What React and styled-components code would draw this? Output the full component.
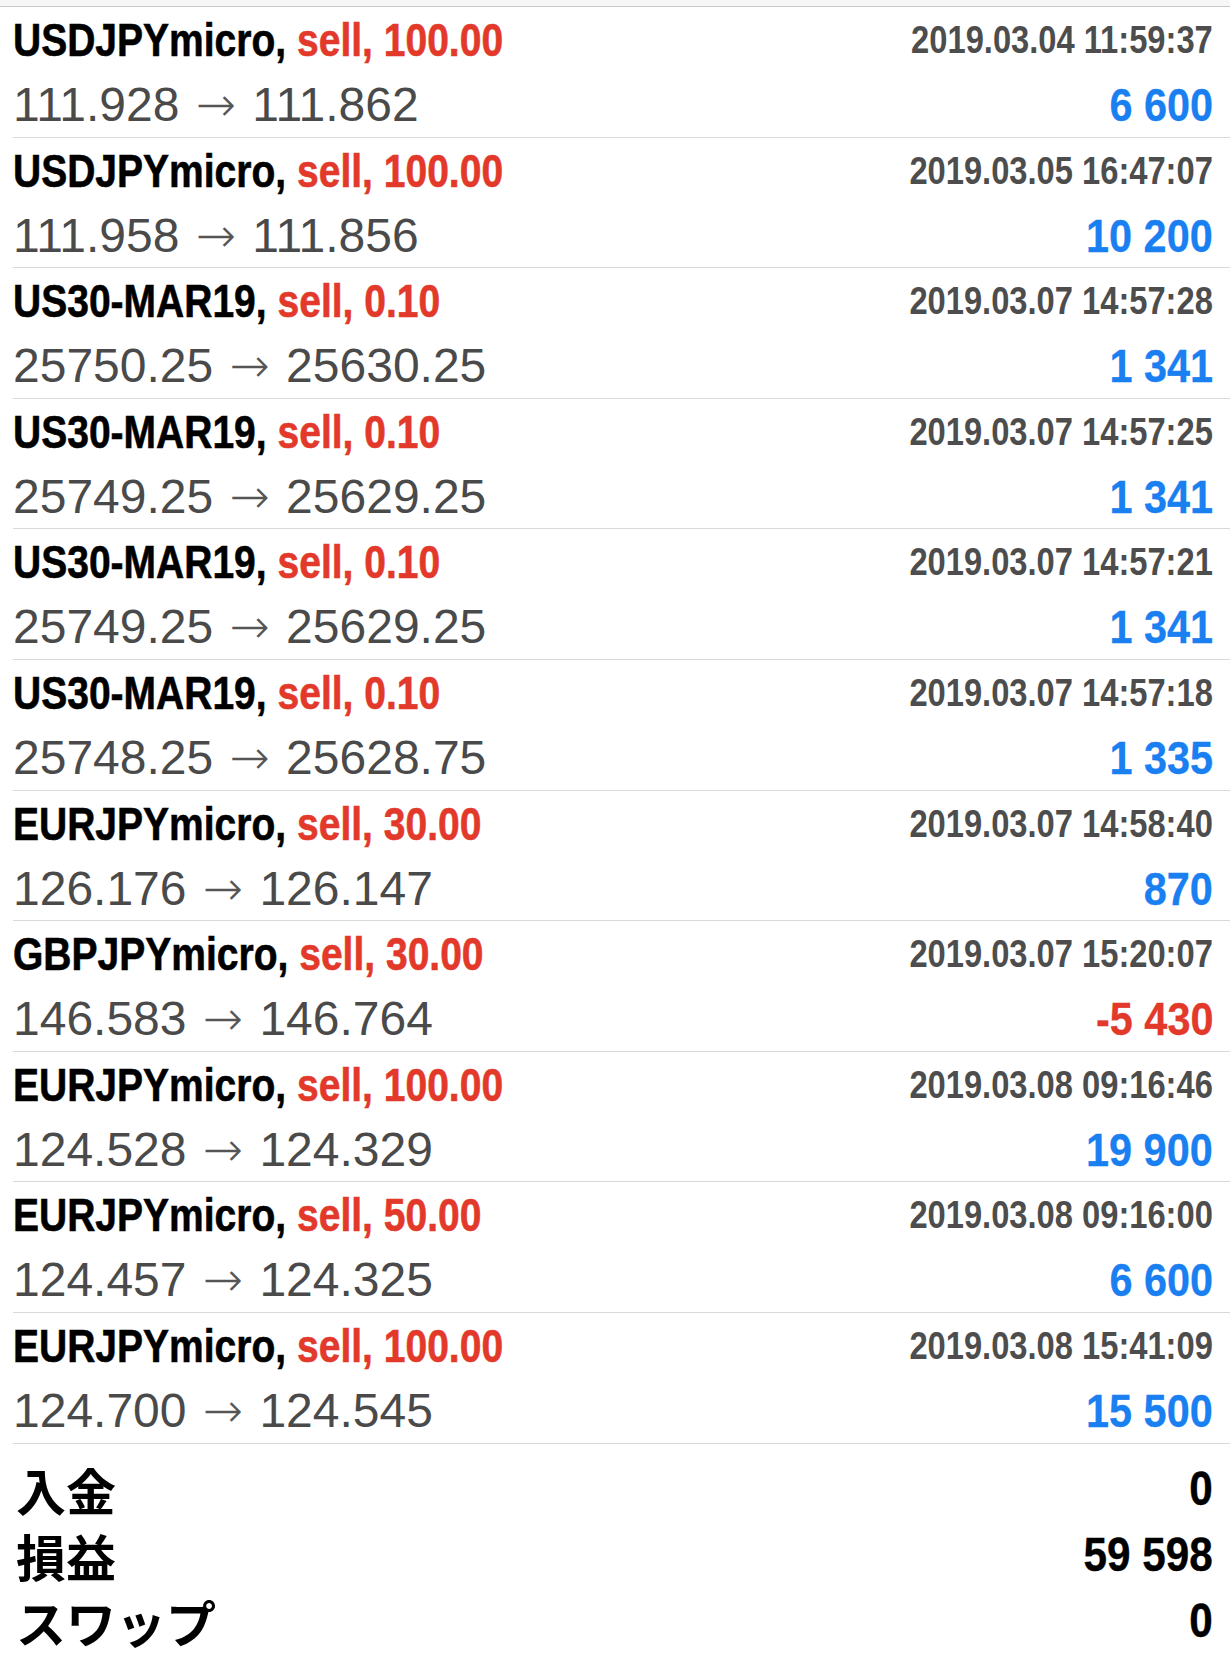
import React from "react";
import styled, { createGlobalStyle } from "styled-components";

const GlobalStyle = createGlobalStyle`
  html, body {
    margin: 0;
    padding: 0;
    background: #ffffff;
  }
  body {
    font-family: "Liberation Sans", Arial, sans-serif;
    -webkit-font-smoothing: antialiased;
  }
`;

const trades = [
  { symbol: "USDJPYmicro", lots: "100.00", time: "2019.03.04 11:59:37", open: "111.928", close: "111.862", profit: "6 600" },
  { symbol: "USDJPYmicro", lots: "100.00", time: "2019.03.05 16:47:07", open: "111.958", close: "111.856", profit: "10 200" },
  { symbol: "US30-MAR19", lots: "0.10", time: "2019.03.07 14:57:28", open: "25750.25", close: "25630.25", profit: "1 341" },
  { symbol: "US30-MAR19", lots: "0.10", time: "2019.03.07 14:57:25", open: "25749.25", close: "25629.25", profit: "1 341" },
  { symbol: "US30-MAR19", lots: "0.10", time: "2019.03.07 14:57:21", open: "25749.25", close: "25629.25", profit: "1 341" },
  { symbol: "US30-MAR19", lots: "0.10", time: "2019.03.07 14:57:18", open: "25748.25", close: "25628.75", profit: "1 335" },
  { symbol: "EURJPYmicro", lots: "30.00", time: "2019.03.07 14:58:40", open: "126.176", close: "126.147", profit: "870" },
  { symbol: "GBPJPYmicro", lots: "30.00", time: "2019.03.07 15:20:07", open: "146.583", close: "146.764", profit: "-5 430", loss: true },
  { symbol: "EURJPYmicro", lots: "100.00", time: "2019.03.08 09:16:46", open: "124.528", close: "124.329", profit: "19 900" },
  { symbol: "EURJPYmicro", lots: "50.00", time: "2019.03.08 09:16:00", open: "124.457", close: "124.325", profit: "6 600" },
  { symbol: "EURJPYmicro", lots: "100.00", time: "2019.03.08 15:41:09", open: "124.700", close: "124.545", profit: "15 500" },
];

const totals = [
  { label: "入金", value: "0" },
  { label: "損益", value: "59 598" },
  { label: "スワップ", value: "0" },
];

function App() {
  return (
    <>
      <GlobalStyle />
      <Screen>
        <TopStrip />
        <TradeList>
          {trades.map((t, i) => (
            <TradeRow key={i}>
              <HeadLine>
                <Title>
                  {t.symbol}, <Side>sell, {t.lots}</Side>
                </Title>
                <Time>{t.time}</Time>
              </HeadLine>
              <PriceLine>
                <Prices>
                  {t.open} <Arrow>→</Arrow> {t.close}
                </Prices>
                <Profit $loss={t.loss}>{t.profit}</Profit>
              </PriceLine>
            </TradeRow>
          ))}
        </TradeList>
        <Summary>
          {totals.map((s) => (
            <SummaryRow key={s.label}>
              <SummaryLabel>{s.label}</SummaryLabel>
              <SummaryValue>{s.value}</SummaryValue>
            </SummaryRow>
          ))}
        </Summary>
      </Screen>
    </>
  );
}

const Screen = styled.div`
  width: 1230px;
  height: 1657px;
  overflow: hidden;
  background: #ffffff;
`;

const TopStrip = styled.div`
  height: 6px;
  background: #f7f7f7;
  border-bottom: 1px solid #c8c8c8;
`;

const TradeList = styled.div`
  display: flex;
  flex-direction: column;
  padding-left: 13px;
`;

const TradeRow = styled.div`
  box-sizing: border-box;
  height: 130.6px;
  flex: none;
  padding: 5px 17px 0 0;
  border-bottom: 1px solid #d9d9d9;
  display: flex;
  flex-direction: column;
`;

const HeadLine = styled.div`
  display: flex;
  justify-content: space-between;
  align-items: baseline;
  flex: none;
  height: 56px;
  line-height: 56px;
`;

const Title = styled.span`
  display: inline-block;
  font-weight: 700;
  font-size: 47px;
  color: #000000;
  white-space: pre;
  -webkit-text-stroke: 0.6px currentColor;
  transform: scaleX(0.83);
  transform-origin: left center;
`;

const Side = styled.span`
  color: #e2392b;
`;

const Time = styled.span`
  display: inline-block;
  font-weight: 700;
  font-size: 38px;
  color: #4d4d4d;
  white-space: pre;
  transform: translateY(-3px) scaleX(0.86);
  transform-origin: right center;
`;

const PriceLine = styled.div`
  display: flex;
  justify-content: space-between;
  align-items: baseline;
  flex: none;
  padding-top: 4px;
  height: 64px;
  line-height: 64px;
`;

const Prices = styled.span`
  font-size: 48px;
  color: #4a4a4a;
  white-space: pre;
`;

const Arrow = styled.span`
  font-family: "DejaVu Sans", sans-serif;
  font-weight: 200;
  font-size: 48px;
  margin: 0 3px;
  color: #555555;
`;

const Profit = styled.span`
  display: inline-block;
  font-weight: 700;
  font-size: 46px;
  color: ${(p) => (p.$loss ? "#e2392b" : "#1a7ff0")};
  white-space: pre;
  -webkit-text-stroke: 0.3px currentColor;
  transform: scaleX(0.9);
  transform-origin: right center;
`;

const Summary = styled.div`
  display: flex;
  flex-direction: column;
  padding: 12px 17px 0 16px;
`;

const SummaryRow = styled.div`
  display: flex;
  justify-content: space-between;
  align-items: center;
  height: 66px;
`;

const SummaryLabel = styled.span`
  font-family: "Noto Sans CJK JP", "Noto Sans CJK SC", sans-serif;
  font-weight: 700;
  font-size: 50px;
  line-height: 1;
  color: #000000;
`;

const SummaryValue = styled.span`
  display: inline-block;
  font-weight: 700;
  font-size: 48px;
  line-height: 1;
  color: #000000;
  white-space: pre;
  -webkit-text-stroke: 0.4px currentColor;
  transform: scaleX(0.88);
  transform-origin: right center;
`;

export default App;
